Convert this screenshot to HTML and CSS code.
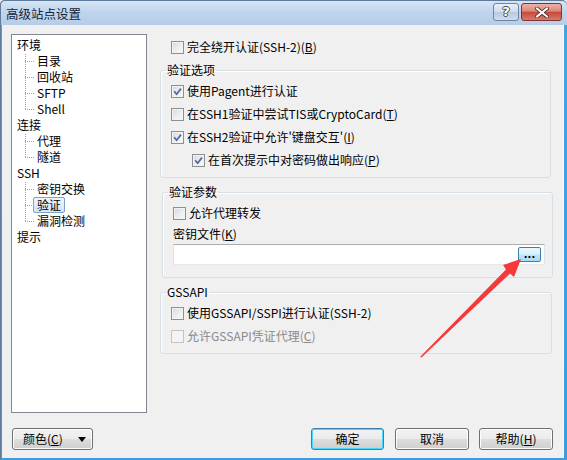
FILE: index.html
```html
<!DOCTYPE html>
<html lang="zh-CN">
<head>
<meta charset="utf-8">
<title>高级站点设置</title>
<link rel="stylesheet" href="styles.css">
</head>
<body>
<div class="window">
  <div class="titlebar">
    <span class="title">高级站点设置</span>
    <div class="caption-btns">
      <span class="cap help">?</span>
      <span class="cap close">
        <svg width="14" height="11" viewBox="0 0 14 11"><path d="M2 1.5 L12 9.5 M12 1.5 L2 9.5" stroke="#4a2a2a" stroke-width="3.6" stroke-linecap="square"/><path d="M2 1.5 L12 9.5 M12 1.5 L2 9.5" stroke="#ffffff" stroke-width="2" stroke-linecap="square"/></svg>
      </span>
    </div>
  </div>

  <div class="client">
    <div class="main">
      <ul class="tree">
        <li><span class="item">环境</span>
          <ul class="children">
            <li><span class="item">目录</span></li>
            <li><span class="item">回收站</span></li>
            <li><span class="item">SFTP</span></li>
            <li><span class="item">Shell</span></li>
          </ul>
        </li>
        <li><span class="item">连接</span>
          <ul class="children">
            <li><span class="item">代理</span></li>
            <li><span class="item">隧道</span></li>
          </ul>
        </li>
        <li><span class="item">SSH</span>
          <ul class="children">
            <li><span class="item">密钥交换</span></li>
            <li><span class="item"><span class="sel">验证</span></span></li>
            <li><span class="item">漏洞检测</span></li>
          </ul>
        </li>
        <li><span class="item">提示</span></li>
      </ul>

      <div class="panel">
        <div class="row top-row"><span class="cb"></span><span class="txt">完全绕开认证(SSH-2)(<u>B</u>)</span></div>

        <fieldset class="group g1">
          <legend>验证选项</legend>
          <div class="row"><span class="cb checked"><svg viewBox="0 0 13 13"><path d="M3.2 6.3 L5.6 9.2 L10 3.6" fill="none" stroke="#51679c" stroke-width="1.7"/></svg></span><span class="txt">使用Pagent进行认证</span></div>
          <div class="row gap"><span class="cb"></span><span class="txt">在SSH1验证中尝试TIS或CryptoCard(<u>T</u>)</span></div>
          <div class="row gap"><span class="cb checked"><svg viewBox="0 0 13 13"><path d="M3.2 6.3 L5.6 9.2 L10 3.6" fill="none" stroke="#51679c" stroke-width="1.7"/></svg></span><span class="txt">在SSH2验证中允许'键盘交互'(<u>I</u>)</span></div>
          <div class="row gap indent"><span class="cb checked"><svg viewBox="0 0 13 13"><path d="M3.2 6.3 L5.6 9.2 L10 3.6" fill="none" stroke="#51679c" stroke-width="1.7"/></svg></span><span class="txt">在首次提示中对密码做出响应(<u>P</u>)</span></div>
        </fieldset>

        <fieldset class="group g2">
          <legend>验证参数</legend>
          <div class="row"><span class="cb"></span><span class="txt">允许代理转发</span></div>
          <div class="row label-row"><span class="txt plain">密钥文件(<u>K</u>)</span></div>
          <div class="keyfile"><span class="browse">...</span></div>
        </fieldset>

        <fieldset class="group g3">
          <legend>GSSAPI</legend>
          <div class="row"><span class="cb"></span><span class="txt">使用GSSAPI/SSPI进行认证(SSH-2)</span></div>
          <div class="row gap disabled"><span class="cb"></span><span class="txt">允许GSSAPI凭证代理(<u>C</u>)</span></div>
        </fieldset>
      </div>
    </div>

    <div class="footer">
      <span class="btn color-btn"><span>颜色(<u>C</u>)</span><span class="caret"></span></span>
      <span class="btn default ok">确定</span>
      <span class="btn cancel">取消</span>
      <span class="btn help-btn">帮助(<u>H</u>)</span>
    </div>
  </div>

  <svg class="arrow" width="567" height="460" viewBox="0 0 567 460">
    <polygon points="420,357 506,269.5 503,265 521,259 514,277 510,273.5 421.5,357.5" fill="#f5393a"/>
  </svg>
</div>
</body>
</html>
```

FILE: styles.css
```css
html, body {
  margin: 0;
  padding: 0;
  background: #f0f0f0;
}

body {
  font-family: "Noto Sans CJK SC", "Noto Sans", sans-serif;
  font-size: 12px;
  color: #000;
}

.window {
  position: relative;
  width: 567px;
  height: 460px;
  box-sizing: border-box;
  display: flex;
  flex-direction: column;
  background: linear-gradient(to bottom, #d9e6f5 0px, #c0d5ed 12px, #b6cde8 25px, #46a3e4 25px, #3d9ce0 100%);
  border-radius: 5px 5px 0 0;
  overflow: hidden;
  box-shadow: inset 1px 0 0 #5f7b9d, inset 0 1px 0 #5f7b9d;
}

/* ---------- title bar ---------- */
.titlebar {
  height: 25px;
  display: flex;
  align-items: flex-start;
  padding: 0 5px 0 6px;
  flex: none;
}

.title {
  padding-top: 5px;
  line-height: 18px;
  font-size: 12.5px;
  color: #12233a;
}

.caption-btns {
  margin-left: auto;
  margin-top: 3px;
  display: flex;
  gap: 2px;
}

.cap {
  height: 18px;
  box-sizing: border-box;
  border-radius: 3px;
  display: flex;
  align-items: center;
  justify-content: center;
}

.help {
  width: 26px;
  border: 1px solid #6f84a0;
  background: linear-gradient(to bottom, #e9f0f8 0%, #cfdcec 48%, #b8cbe2 52%, #cddcee 100%);
  color: #fff;
  font-family: "DejaVu Sans", sans-serif;
  font-weight: bold;
  font-size: 13px;
  line-height: 16px;
  text-shadow: 1px 0 0 #3d4a5c, -1px 0 0 #3d4a5c, 0 1px 0 #3d4a5c, 0 -1px 0 #3d4a5c;
}

.close {
  width: 41px;
  border: 1px solid #83322c;
  background: linear-gradient(to bottom, #eab3a7 0%, #dc8679 45%, #c8493c 52%, #d67a6c 100%);
}

/* ---------- client ---------- */
.client {
  flex: 1;
  margin: 0 3px 2px 2px;
  background: #f0f0f0;
  border-right: 1px solid #fbfbfb;
  display: flex;
  flex-direction: column;
}

.main {
  display: flex;
  padding: 9px 0 0 9px;
}

/* ---------- tree ---------- */
.tree {
  list-style: none;
  margin: 0;
  padding: 2px 0 0 0;
  width: 136px;
  height: 379px;
  box-sizing: border-box;
  border: 1px solid #828790;
  background: #fff;
  flex: none;
}

.tree li {
  display: block;
}

.item {
  display: block;
  height: 16px;
  line-height: 16px;
  padding-left: 5px;
  white-space: nowrap;
}

.children {
  list-style: none;
  margin: 0;
  padding: 0;
  position: relative;
}

.children::before {
  content: "";
  position: absolute;
  left: 13px;
  top: 1px;
  bottom: 8px;
  border-left: 1px dotted #a0a0a0;
}

.children .item {
  position: relative;
  padding-left: 25px;
}

.children .item::before {
  content: "";
  position: absolute;
  left: 13px;
  top: 8px;
  width: 9px;
  border-top: 1px dotted #a0a0a0;
}

.sel {
  display: inline-block;
  height: 16px;
  line-height: 14px;
  box-sizing: border-box;
  padding: 0 3px;
  margin-left: -4px;
  border: 1px solid #7da2ce;
  border-radius: 2px;
  background: linear-gradient(to bottom, #eef5fd, #d3e5fa);
  position: relative;
}

/* ---------- right panel ---------- */
.panel {
  width: 393px;
  margin-left: 13px;
  display: flex;
  flex-direction: column;
}

.row {
  display: flex;
  align-items: center;
  height: 18px;
  white-space: nowrap;
}

.row.gap {
  margin-top: 5px;
}

.top-row {
  margin-top: 4px;
  padding-left: 11px;
}

.indent {
  padding-left: 21px;
}

.txt {
  margin-left: 3px;
  line-height: 16px;
}

.txt.plain {
  margin-left: 0;
}

.cb {
  width: 13px;
  height: 13px;
  box-sizing: border-box;
  border: 1px solid #8e8f8f;
  background: linear-gradient(135deg, #d4d6da 0%, #eceef0 55%, #f8f8f8 100%);
  box-shadow: inset 0 0 0 1px #f3f3f3;
  flex: none;
  position: relative;
}

.cb svg {
  position: absolute;
  left: -1px;
  top: -1px;
  width: 13px;
  height: 13px;
}

.disabled .cb {
  border-color: #c4c4c4;
  background: #f4f4f4;
  box-shadow: none;
}

.disabled .txt {
  color: #8a8a8a;
}

.group {
  margin: 7px 0 0 0;
  padding: 5px 10px 8px 10px;
  border: 1px solid #d5dfe5;
  border-radius: 3px;
  min-width: 0;
  box-shadow: inset 1px 1px 0 #fff;
}

.group legend {
  padding: 0 1px;
  margin-left: -5px;
  line-height: 14px;
  font-size: 12px;
}

.g1 {
  margin-right: 2px;
}

.g2 {
  margin-left: 2px;
  padding: 5px 7px 12px 10px;
}

.g3 {
  margin-right: 1px;
}

.label-row {
  margin-top: 3px;
}

.keyfile {
  margin-top: 1px;
  height: 21px;
  box-sizing: border-box;
  background: #fff;
  border: 1px solid #e2e3ea;
  border-top-color: #abadb3;
  border-bottom-color: #e3e9ef;
  display: flex;
  align-items: center;
  justify-content: flex-end;
  padding-right: 3px;
}

.browse {
  width: 23px;
  height: 15px;
  box-sizing: border-box;
  border: 1px solid #3c7fb1;
  border-radius: 2px;
  background: linear-gradient(to bottom, #eaf6fd 0%, #d9f0fc 48%, #bee6fd 52%, #a7d9f5 100%);
  font-family: "DejaVu Sans", sans-serif;
  font-size: 10px;
  line-height: 14px;
  text-align: center;
  color: #000;
  font-weight: bold;
}

/* ---------- footer ---------- */
.footer {
  display: flex;
  margin-top: 15px;
  padding: 0 10px 0 10px;
  height: 22px;
}

.btn {
  height: 22px;
  box-sizing: border-box;
  border: 1px solid #707070;
  border-radius: 3px;
  background: linear-gradient(to bottom, #f2f2f2 0%, #ebebeb 50%, #dddddd 51%, #cfcfcf 100%);
  box-shadow: inset 0 0 0 1px #fcfcfc;
  display: flex;
  align-items: center;
  justify-content: center;
  line-height: 16px;
  white-space: nowrap;
}

.color-btn {
  width: 81px;
  justify-content: flex-start;
  padding-left: 10px;
}

.caret {
  margin-left: auto;
  margin-right: 6px;
  width: 0;
  height: 0;
  border-left: 4px solid transparent;
  border-right: 4px solid transparent;
  border-top: 5px solid #000;
}

.ok {
  margin-left: auto;
  width: 73px;
}

.default {
  border-color: #3c7fb1;
  box-shadow: inset 0 0 0 1px #48d8fb;
}

.cancel {
  width: 74px;
  margin-left: 11px;
}

.help-btn {
  width: 74px;
  margin-left: 10px;
}

/* ---------- annotation arrow ---------- */
.arrow {
  position: absolute;
  left: 0;
  top: 0;
  pointer-events: none;
}
```
